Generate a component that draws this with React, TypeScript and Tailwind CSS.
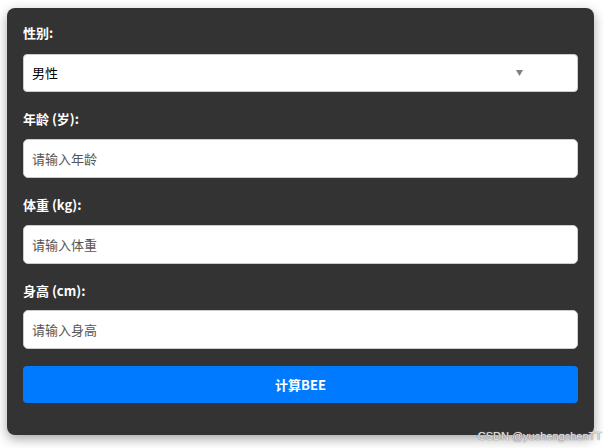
import React from "react";

const font = { fontFamily: '"Noto Sans CJK SC", "Noto Sans", sans-serif' };

function Label({ children }: { children: React.ReactNode }) {
  return (
    <label className="block text-[13px] leading-[16px] font-bold text-white">
      {children}
    </label>
  );
}

function Input({ placeholder, mt }: { placeholder: string; mt: string }) {
  return (
    <input
      placeholder={placeholder}
      className={`${mt} block w-full h-[39px] rounded-[5px] border border-[#cccccc] bg-white px-[8px] text-[13px] text-black placeholder:text-[#555555] outline-none`}
      style={font}
    />
  );
}

export default function App() {
  return (
    <div className="relative w-[604px] h-[448px] bg-white overflow-hidden" style={font}>
      <div className="ml-[7px] mt-[8px] w-[587px] rounded-[8px] bg-[#333333] px-4 pt-[17px] pb-[32px] shadow-[0_4px_12px_rgba(0,0,0,0.35)]">
        <Label>性别:</Label>
        <div className="relative mt-[13px] h-[38px] w-full rounded-[4px] border border-[#cccccc] bg-white flex items-center px-[8px]">
          <span className="text-[13px] text-black">男性</span>
          <svg className="absolute left-[492px] top-[15px]" width="7" height="6" viewBox="0 0 7 6">
            <polygon points="0,0 7,0 3.5,6" fill="#808080" />
          </svg>
        </div>
        <div className="mt-[19px]">
          <Label>年龄 (岁):</Label>
        </div>
        <Input placeholder="请输入年龄" mt="mt-[12px]" />
        <div className="mt-[19px]">
          <Label>体重 (kg):</Label>
        </div>
        <Input placeholder="请输入体重" mt="mt-[12px]" />
        <div className="mt-[19px]">
          <Label>身高 (cm):</Label>
        </div>
        <Input placeholder="请输入身高" mt="mt-[11px]" />
        <button className="mt-[17px] block w-full h-[37px] rounded-[4px] bg-[#007bff] text-[13px] font-bold text-white">
          计算BEE
        </button>
      </div>
      <div
        className="absolute right-[2px] bottom-[5px] text-[11px] leading-[13px] text-[#e6e6e6]"
        style={{ fontFamily: '"Liberation Sans", sans-serif', textShadow: "0 0 1px #777, 0 0 1px #777" }}
      >
        CSDN @yuchengchenTT
      </div>
    </div>
  );
}
